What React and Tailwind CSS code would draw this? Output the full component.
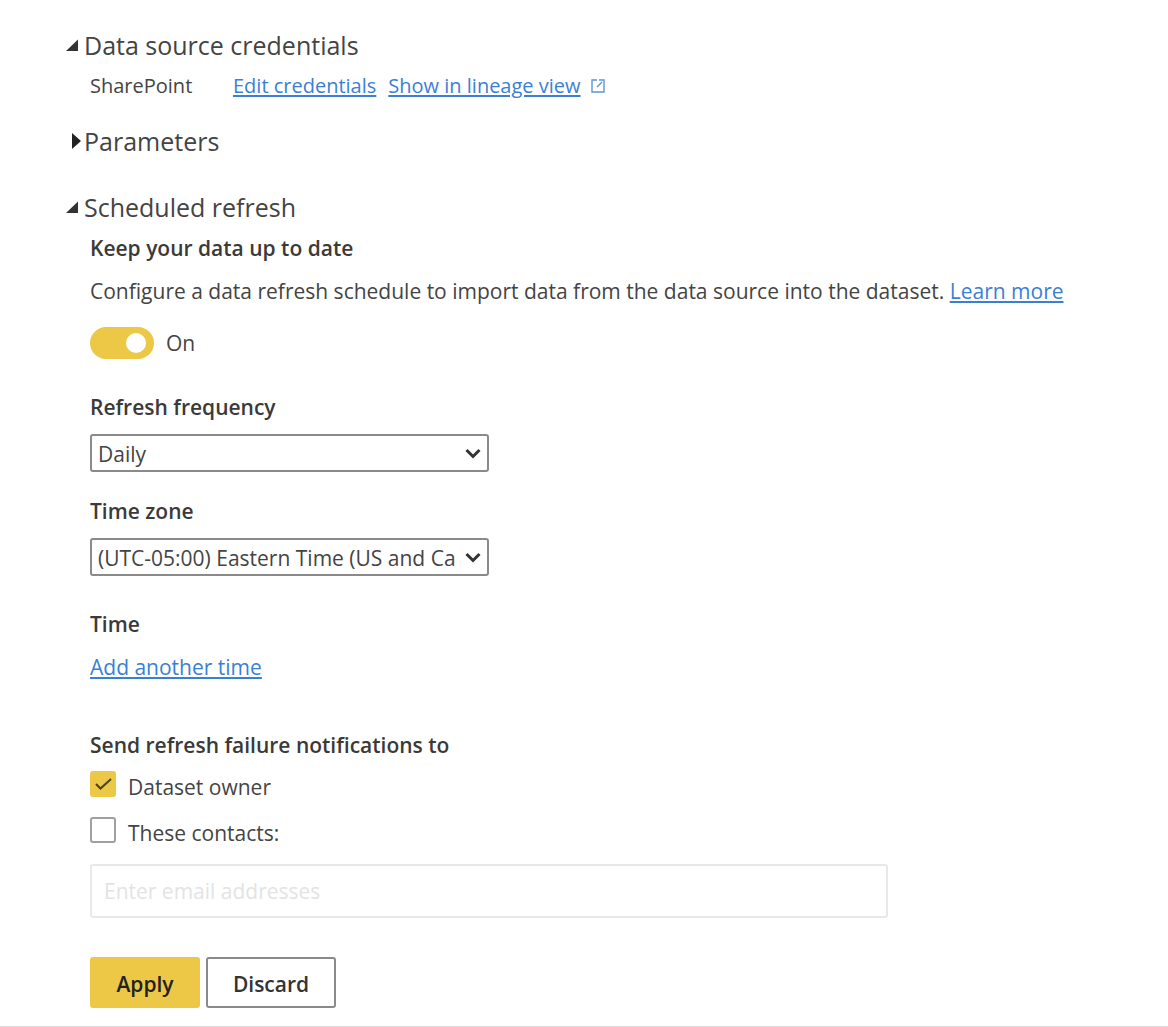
import React, { useState } from 'react';

function CollapseIcon({ open }) {
  return open ? (
    <svg className="w-4 h-4" viewBox="0 0 16 16" fill="#333333" aria-hidden="true">
      <path d="M12 2.5V14H0z" />
    </svg>
  ) : (
    <svg className="w-4 h-4" viewBox="0 0 16 16" fill="#222222" aria-hidden="true">
      <path d="M6 0l9 8-9 8z" />
    </svg>
  );
}

function SectionTitle({ title, open, onToggle }) {
  return (
    <h2>
      <button
        type="button"
        aria-expanded={open}
        onClick={onToggle}
        className="flex items-center gap-0.5 text-[25px] leading-9 text-[#444444] cursor-pointer"
      >
        <CollapseIcon open={open} />
        {title}
      </button>
    </h2>
  );
}

function TextLink({ children }) {
  return (
    <a href="#" className="text-[#3b7fd4] underline underline-offset-2 decoration-2 hover:text-[#2563b0]">
      {children}
    </a>
  );
}

function SelectField({ id, label, value, options, onChange }) {
  return (
    <div className="w-[399px] max-w-full">
      <label htmlFor={id} className="block font-semibold text-[#3b3a39]">
        {label}
      </label>
      <div className="relative mt-[13px]">
        <select
          id={id}
          value={value}
          onChange={(e) => onChange(e.target.value)}
          className="block w-full h-[38px] appearance-none rounded-[3px] border-2 border-[#8a8a8a] bg-white pt-0.5 pl-1.5 pr-8"
        >
          {options.map((option) => (
            <option key={option}>{option}</option>
          ))}
        </select>
        <svg
          className="absolute right-2 top-3.5 w-4 h-3 pointer-events-none"
          viewBox="0 0 16 12"
          fill="none"
          stroke="#333333"
          strokeWidth="3"
          aria-hidden="true"
        >
          <path d="M1.5 2L8 8.5 14.5 2" />
        </svg>
      </div>
    </div>
  );
}

function CheckField({ label, checked, onChange }) {
  return (
    <label className="flex gap-3">
      <span className="relative h-[26px] w-[26px] shrink-0">
        <input
          type="checkbox"
          checked={checked}
          onChange={(e) => onChange(e.target.checked)}
          className="block h-full w-full appearance-none rounded-[3px] border-2 border-[#a0a0a0] bg-white checked:border-[#ecc846] checked:bg-[#ecc846]"
        />
        {checked && (
          <svg
            className="absolute inset-0 pointer-events-none"
            viewBox="0 0 26 26"
            fill="none"
            stroke="#4a4220"
            strokeWidth="2"
            aria-hidden="true"
          >
            <path d="M6 13l4.5 4.5L21 8" />
          </svg>
        )}
      </span>
      <span className="pt-0.5 leading-7">{label}</span>
    </label>
  );
}

function App() {
  const [sections, setSections] = useState({ credentials: true, parameters: false, refresh: true });
  const [enabled, setEnabled] = useState(true);
  const [frequency, setFrequency] = useState('Daily');
  const [timeZone, setTimeZone] = useState('(UTC-05:00) Eastern Time (US and Canada)');
  const [notifyOwner, setNotifyOwner] = useState(true);
  const [notifyContacts, setNotifyContacts] = useState(false);

  const toggleSection = (name) => {
    setSections({ ...sections, [name]: !sections[name] });
  };

  return (
    <main className="border-b border-[#dcdcdc] bg-white pt-[27px] pr-4 pb-[18px] pl-[66px] font-['Open_Sans',sans-serif] text-[21px] leading-7 text-[#444444]">
      {/* Data source credentials */}
      <section>
        <SectionTitle
          title="Data source credentials"
          open={sections.credentials}
          onToggle={() => toggleSection('credentials')}
        />
        {sections.credentials && (
          <div className="flex flex-wrap gap-x-3 pl-6 pt-[9px] text-xl leading-7">
            <span className="w-[131px]">SharePoint</span>
            <TextLink>Edit credentials</TextLink>
            <span className="flex items-center gap-2.5">
              <TextLink>Show in lineage view</TextLink>
              <svg className="w-3.5 h-3.5" viewBox="0 0 14 14" fill="none" stroke="#5f93d8" aria-hidden="true">
                <path d="M6 1H1v12h12V1H8M11 3L6 8" strokeWidth="1.4" />
              </svg>
            </span>
          </div>
        )}
      </section>

      {/* Parameters */}
      <section className="mt-[23px]">
        <SectionTitle
          title="Parameters"
          open={sections.parameters}
          onToggle={() => toggleSection('parameters')}
        />
      </section>

      {/* Scheduled refresh */}
      <section className="mt-[30px]">
        <SectionTitle
          title="Scheduled refresh"
          open={sections.refresh}
          onToggle={() => toggleSection('refresh')}
        />
        {sections.refresh && (
          <form className="pl-6 pt-[9px]" onSubmit={(e) => e.preventDefault()}>
            <h3 className="font-semibold text-[#3b3a39]">Keep your data up to date</h3>
            <p className="mt-[15px]">
              Configure a data refresh schedule to import data from the data source into the dataset.{' '}
              <TextLink>Learn more</TextLink>
            </p>

            <label className="mt-[22px] flex w-fit items-center gap-3">
              <span className="relative h-8 w-16">
                <input
                  type="checkbox"
                  role="switch"
                  checked={enabled}
                  onChange={(e) => setEnabled(e.target.checked)}
                  className="peer block h-full w-full appearance-none rounded-full bg-[#a0a0a0] checked:bg-[#ecc846]"
                />
                <span className="absolute left-2 top-1.5 h-5 w-5 rounded-full bg-white pointer-events-none peer-checked:left-auto peer-checked:right-2" />
              </span>
              {enabled ? 'On' : 'Off'}
            </label>

            <div className="mt-[34px] flex flex-col gap-[25px]">
              <SelectField
                id="frequency"
                label="Refresh frequency"
                value={frequency}
                options={['Daily', 'Weekly']}
                onChange={setFrequency}
              />
              <SelectField
                id="timezone"
                label="Time zone"
                value={timeZone}
                options={['(UTC-05:00) Eastern Time (US and Canada)', '(UTC) Coordinated Universal Time']}
                onChange={setTimeZone}
              />
            </div>

            <h3 className="mt-[34px] font-semibold text-[#3b3a39]">Time</h3>
            <p className="mt-[15px]">
              <TextLink>Add another time</TextLink>
            </p>

            <fieldset className="mt-[50px]">
              <legend className="font-semibold text-[#3b3a39]">Send refresh failure notifications to</legend>
              <div className="mt-3 flex flex-col gap-4">
                <CheckField label="Dataset owner" checked={notifyOwner} onChange={setNotifyOwner} />
                <CheckField label="These contacts:" checked={notifyContacts} onChange={setNotifyContacts} />
              </div>
              <input
                type="email"
                aria-label="Contacts"
                placeholder="Enter email addresses"
                disabled={!notifyContacts}
                className="mt-[17px] block h-[54px] w-[798px] max-w-full rounded-[3px] border-2 border-[#e8e8e8] bg-white px-3 placeholder:text-[#e3e3e3]"
              />
            </fieldset>

            <div className="mt-[39px] flex gap-1.5 font-semibold">
              <button type="submit" className="h-[51px] w-[110px] rounded-[3px] bg-[#ecc846] pt-0.5 text-[#222222]">
                Apply
              </button>
              <button
                type="button"
                className="h-[51px] w-[130px] rounded-[3px] border-2 border-[#8a8a8a] bg-white pt-0.5 text-[#333333]"
              >
                Discard
              </button>
            </div>
          </form>
        )}
      </section>
    </main>
  );
}

export default App;
